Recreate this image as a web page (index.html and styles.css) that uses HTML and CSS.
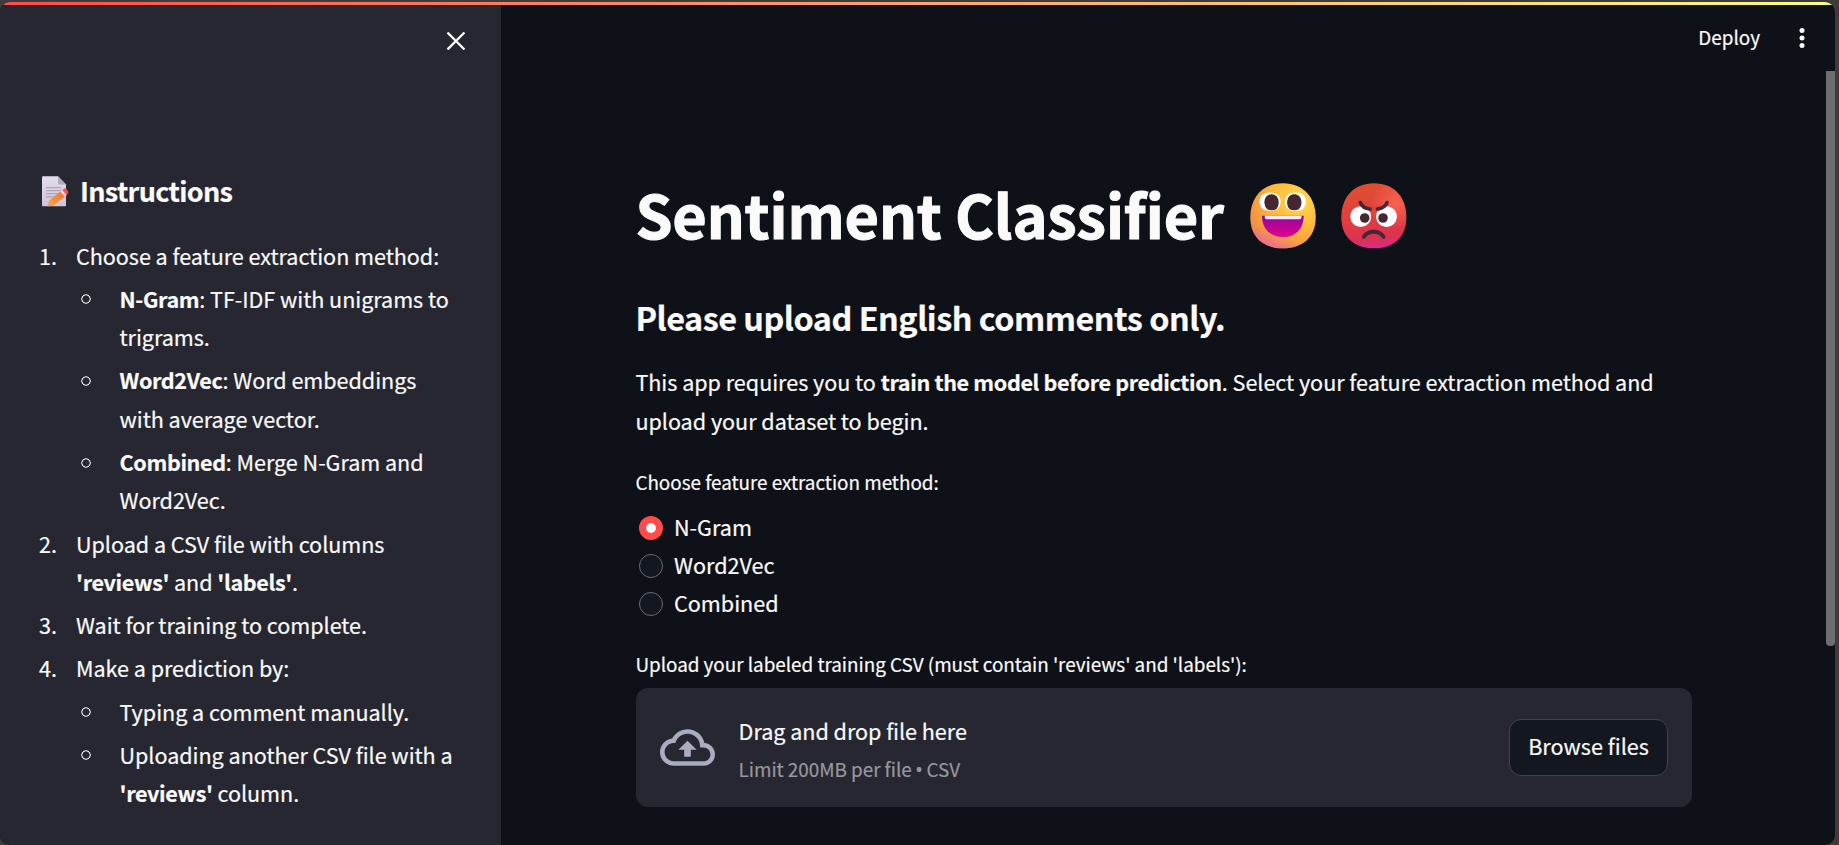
FILE: index.html
```
<!DOCTYPE html>
<html lang="en">
<head>
<meta charset="utf-8">
<title>Sentiment Classifier</title>
<link rel="stylesheet" href="styles.css">
</head>
<body>
<div class="app">
  <div class="decoration"></div>
  <aside class="sidebar">
    <div class="sidebar-top">
      <svg class="close" viewBox="0 0 18 18"><path d="M1.3 1.3 16.7 16.7M16.7 1.3 1.3 16.7"/></svg>
    </div>
    <h3 class="side-title">
      <svg class="memo" viewBox="0 0 27 31">
        <defs>
          <linearGradient id="paper" x1="0" y1="0" x2="0" y2="1"><stop offset="0" stop-color="#e4dcec"/><stop offset="1" stop-color="#cfc3d8"/></linearGradient>
          <linearGradient id="pencil" x1="0" y1="1" x2="1" y2="0"><stop offset="0" stop-color="#ffa53c"/><stop offset="1" stop-color="#f4703a"/></linearGradient>
        </defs>
        <path d="M0 1.5Q0 .3 1.2 .3H16L24 8.5V29.5Q24 30.3 23 30.3H0Z" fill="url(#paper)"/>
        <path d="M16 .3 24 8.5H17.5Q16 8.5 16 7Z" fill="#b5a9bf"/>
        <path d="M4 11.7H19M4 14.7H19M4 17.7H17M4 20.9H13" stroke="#a79bb2" stroke-width="1"/>
        <path d="M5.5 30.3 7.5 24.2 18.6 15.6 23 20.4 11.8 29.3Z" fill="url(#pencil)"/>
        <path d="M5.5 30.3 7.2 25.3 10.8 29.7Z" fill="#d9a38f"/>
        <path d="M18.4 15.8 20.7 14 25 18.9 22.8 20.6Z" fill="#e6dcf0"/>
        <path d="M20.4 14.2 22.5 12.5Q23.3 12 24 12.7L26 15Q26.8 16.1 26 17.2L24.6 19Z" fill="#f8524c"/>
      </svg>
      <span>Instructions</span>
    </h3>
    <ol class="steps">
      <li><div><p>Choose a feature extraction method:</p>
        <ul class="options">
          <li><div><b>N-Gram</b>: TF-IDF with unigrams to trigrams.</div></li>
          <li><div><b>Word2Vec</b>: Word embeddings with average vector.</div></li>
          <li><div><b>Combined</b>: Merge N-Gram and Word2Vec.</div></li>
        </ul></div></li>
      <li><div>Upload a CSV file with columns <b>'reviews'</b> and <b>'labels'</b>.</div></li>
      <li><div>Wait for training to complete.</div></li>
      <li><div><p>Make a prediction by:</p>
        <ul class="options">
          <li><div>Typing a comment manually.</div></li>
          <li><div>Uploading another CSV file with a <b>'reviews'</b> column.</div></li>
        </ul></div></li>
    </ol>
  </aside>
  <main class="main">
    <header class="toolbar">
      <span>Deploy</span>
      <svg class="dots" viewBox="0 0 6 20"><circle cx="3" cy="2.5" r="2.5"/><circle cx="3" cy="10" r="2.5"/><circle cx="3" cy="17.5" r="2.5"/></svg>
    </header>
    <section class="content">
      <h1 class="title">
        <span>Sentiment Classifier</span>
        <svg class="face" viewBox="0 0 66 66">
          <defs>
            <radialGradient id="sun" cx=".75" cy=".25" r=".85"><stop offset="0" stop-color="#ffdb50"/><stop offset=".55" stop-color="#ffb63a"/><stop offset="1" stop-color="#f08a45"/></radialGradient>
            <linearGradient id="glow" x1=".6" y1=".5" x2=".4" y2="1"><stop offset=".6" stop-color="#f070a0" stop-opacity="0"/><stop offset="1" stop-color="#e86aa0" stop-opacity=".85"/></linearGradient>
            <linearGradient id="mouth" x1="0" y1="0" x2="0" y2="1"><stop offset="0" stop-color="#8d06a0"/><stop offset="1" stop-color="#e4028b"/></linearGradient>
          </defs>
          <path d="M33 .3C53 .3 65.7 14 65.7 34.5C65.7 54 53 65.3 33 65.3S.3 54 .3 34.5C.3 14 13 .3 33 .3Z" fill="url(#sun)"/>
          <path d="M33 .3C53 .3 65.7 14 65.7 34.5C65.7 54 53 65.3 33 65.3S.3 54 .3 34.5C.3 14 13 .3 33 .3Z" fill="url(#glow)"/>
          <path d="M14 27C6.500 22 8 9.500 20 9.500S33.500 22 26.500 27Q20 28.600 14 27Z" fill="#fff"/>
          <path d="M39.500 27C32 22 33.500 9.500 45.500 9.500S59 22 51.500 27Q45 28.600 39.500 27Z" fill="#fff"/>
          <path d="M17.500 26.500C12.500 22 13.500 11.300 21.500 11.300S30.500 22 26 26.500Q21.500 28 17.500 26.500Z" fill="#45282f"/>
          <path d="M40 26.500C35 22 36.500 11.300 44.300 11.300S53.500 22 48.500 26.500Q44 28 40 26.500Z" fill="#45282f"/>
          <path d="M12 32.700H53.700C53.700 45 46.500 54 33 54S12 45 12 32.700Z" fill="url(#mouth)"/>
          <path d="M14.800 32.700H51.500V34.500Q51.500 36.300 49.500 36.300H16.800Q14.800 36.300 14.800 34.500Z" fill="#f6e6fa"/>
        </svg>
        <svg class="face angry" viewBox="0 0 66 66">
          <defs>
            <linearGradient id="rage" x1=".4" y1="0" x2=".5" y2="1"><stop offset="0" stop-color="#dc5030"/><stop offset=".5" stop-color="#e23f40"/><stop offset=".85" stop-color="#dc3150"/><stop offset="1" stop-color="#d92a90"/></linearGradient>
            <radialGradient id="heat" cx=".85" cy=".3" r=".4"><stop offset="0" stop-color="#ff6a58" stop-opacity=".8"/><stop offset="1" stop-color="#ff6a58" stop-opacity="0"/></radialGradient>
          </defs>
          <path d="M33 .3C53 .3 65.300 14 65.300 34.500C65.300 54 53 65.300 33 65.300S.3 54 .3 34.500C.3 14 13 .3 33 .3Z" fill="url(#rage)"/>
          <path d="M33 .3C53 .3 65.300 14 65.300 34.500C65.300 54 53 65.300 33 65.300S.3 54 .3 34.500C.3 14 13 .3 33 .3Z" fill="url(#heat)"/>
          <circle cx="19.700" cy="33.700" r="10.400" fill="#fff"/><circle cx="45.500" cy="33.700" r="10.400" fill="#fff"/>
          <path d="M20 21Q29 27 36 22.500L45.500 21L37 28.500Q33 24.500 29 28.500Z" fill="#de4238"/>
          <circle cx="23.700" cy="35" r="4.800" fill="#45282f"/><circle cx="42" cy="35" r="4.800" fill="#45282f"/>
          <path d="M19.300 19.500Q21.500 25.300 29 26M46 19.500Q44 25.300 36.500 26" fill="none" stroke="#40293a" stroke-width="3.600" stroke-linecap="round"/>
          <path d="M22.800 53.700Q26.500 48.800 32.700 48.800T42.600 53.700" fill="none" stroke="#40293a" stroke-width="4" stroke-linecap="round"/>
        </svg>
      </h1>
      <h2 class="subtitle">Please upload English comments only.</h2>
      <p class="intro">This app requires you to <b>train the model before prediction</b>. Select your feature extraction method and upload your dataset to begin.</p>
      <div class="label method-label">Choose feature extraction method:</div>
      <div class="radios">
        <label class="radio"><i class="dot checked"></i>N-Gram</label>
        <label class="radio"><i class="dot"></i>Word2Vec</label>
        <label class="radio"><i class="dot"></i>Combined</label>
      </div>
      <div class="label upload-label">Upload your labeled training CSV (must contain 'reviews' and 'labels'):</div>
      <div class="dropzone">
        <svg class="cloud" viewBox="0 0 24 24"><path d="M19.350 10.040A7.490 7.490 0 0 0 12 4C9.110 4 6.600 5.640 5.350 8.040A5.994 5.994 0 0 0 0 14c0 3.310 2.690 6 6 6h13c2.760 0 5-2.240 5-5 0-2.640-2.050-4.780-4.650-4.960zM19 18H6c-2.210 0-4-1.790-4-4s1.790-4 4-4h.710C7.370 7.690 9.480 6 12 6c3.040 0 5.500 2.460 5.500 5.500v.5H19c1.660 0 3 1.340 3 3s-1.340 3-3 3zM8 13h2.550v3h2.900v-3H16l-4-4z"/></svg>
        <div class="drop-text">
          <span class="drop-main">Drag and drop file here</span>
          <span class="drop-limit">Limit 200MB per file <span class="bullet">•</span> CSV</span>
        </div>
        <button class="browse">Browse files</button>
      </div>
    </section>
    <div class="scroll-thumb"></div>
  </main>
</div>
</body>
</html>
```
FILE: styles.css
```
* { box-sizing: border-box; }
html { background: #3c3c3c; }
body {
  margin: 0;
  height: 845px;
  padding: 2px 4px 0 0;
  overflow: hidden;
  color: #fafafa;
  font: 21.58px/38.4px "Noto Sans CJK SC", sans-serif;
  -webkit-text-stroke: 0.2px;
}
h1, h2, h3, p, ol, ul { margin: 0; padding: 0; }
b { letter-spacing: -0.36px; }
svg { display: block; flex: none; }
.app {
  position: relative;
  display: flex;
  height: 843px;
  border-radius: 10px;
  overflow: hidden;
  background: #0e1117;
}
.decoration {
  position: absolute;
  top: 0;
  left: 0;
  right: 0;
  height: 3px;
  background: linear-gradient(90deg, #ff4b4b, #fffd80);
}
.sidebar {
  width: 501px;
  flex: none;
  padding: 0 36px 0 39px;
  background: #262730;
}
.sidebar-top {
  display: flex;
  justify-content: flex-end;
  height: 171px;
  padding-top: 30px;
}
.close { width: 18px; height: 18px; fill: none; stroke: #fafafa; stroke-width: 2.3; stroke-linecap: square; }
.side-title {
  display: flex;
  gap: 11px;
  padding-left: 3px;
  font-size: 27px;
  line-height: 36px;
  letter-spacing: -0.68px;
}
.memo { width: 27px; height: 31px; margin-top: 3px; }
.steps { margin-top: 27.6px; list-style: none; counter-reset: step; letter-spacing: -0.04px; }
.steps > li {
  display: grid;
  grid-template-columns: 37px 1fr;
  margin-bottom: 4.8px;
  counter-increment: step;
}
.steps > li::before { content: counter(step) "."; }
.options { list-style: none; margin-top: 4.8px; }
.options li {
  display: grid;
  grid-template-columns: 43.5px 1fr;
  margin-bottom: 4.8px;
}
.options li:last-child { margin-bottom: 0; }
.options li::before {
  content: "";
  width: 10px;
  height: 10px;
  margin: 14.5px 0 0 5px;
  background: radial-gradient(circle, transparent 3.4px, #fafafa 3.9px, #fafafa 4.4px, transparent 4.9px);
}
.main { position: relative; flex: 1; }
.toolbar {
  display: flex;
  justify-content: flex-end;
  align-items: center;
  gap: 39px;
  height: 66px;
  padding: 6px 30px 0 0;
  font-size: 18.9px;
}
.toolbar span { margin-top: -1px; }
.dots { width: 6px; height: 20px; fill: #fafafa; }
.content { width: 1056px; margin: 105.5px 0 0 135px; }
.title, .subtitle, .intro, .label { margin-left: -0.6px; }
.title {
  display: flex;
  align-items: center;
  height: 79.2px;
  font-size: 59.4px;
  line-height: 79.2px;
  letter-spacing: -0.14px;
  -webkit-text-stroke: 1.1px;
}
.title span { width: 614.6px; white-space: nowrap; }
.face { width: 66px; height: 66px; margin-top: 5.500px; }
.angry { margin-left: 25px; }
.subtitle { margin-top: 42.6px; font-size: 32.4px; line-height: 43.2px; letter-spacing: -0.51px; }
.intro { margin-top: 25px; letter-spacing: -0.03px; }
.label { font-size: 18.9px; line-height: 30px; letter-spacing: -0.03px; }
.method-label { margin-top: 26.5px; }
.radios { margin-top: 10.8px; }
.radio { display: flex; height: 38px; padding-left: 3px; }
.dot {
  width: 24px;
  height: 24px;
  margin: 8.6px 11px 0 0;
  border: 1px solid #6b6c72;
  border-radius: 50%;
  background: #131720;
}
.checked { border: 7.5px solid #ff4b4b; background: #fafafa; }
.upload-label { margin-top: 27.2px; }
.dropzone {
  display: flex;
  align-items: center;
  height: 119px;
  margin-top: 9.2px;
  padding: 0 24px;
  border-radius: 12px;
  background: #262730;
}
.cloud { width: 55px; height: 55px; fill: #a9adc1; }
.drop-text { display: flex; flex: 1; flex-direction: column; gap: 4px; margin: 0.6px 0 0 23.6px; }
.drop-main { letter-spacing: -0.04px; }
.drop-limit { color: #97989d; font-size: 18.9px; line-height: 30px; letter-spacing: -0.04px; }
.bullet { margin: 0 -0.500px; font-family: "Noto Sans", sans-serif; font-size: 20px; line-height: 20px; }
.browse {
  width: 159px;
  height: 57px;
  padding: 0 0 2px;
  border: 1px solid #41444c;
  border-radius: 12px;
  background: #131720;
  color: #fafafa;
  font: inherit;
}
.scroll-thumb {
  position: absolute;
  top: 69px;
  right: 0;
  width: 9px;
  height: 575px;
  border-radius: 0 0 4px 4px;
  background: #6e6e72;
}
```
